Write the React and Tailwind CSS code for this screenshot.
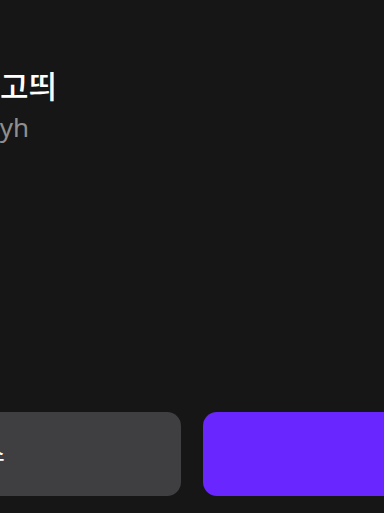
export default function App() {
  return (
    <div
      className="w-[384px] h-[513px] overflow-hidden bg-[#161616] flex flex-col"
      style={{ fontFamily: '"Noto Sans", "Noto Sans CJK KR", sans-serif' }}
    >
      <div className="pt-[62px] flex flex-col">
        <div className="w-[300px] ml-[-243px] text-right text-[31px] leading-[48px] font-medium text-white">
          띄어쓰기 고띄
        </div>
        <div className="w-[200px] ml-[-171px] text-right text-[26px] leading-[34px] text-[#8f8f8f]">
          @godde yh
        </div>
      </div>
      <div className="flex-1" />
      <div className="flex gap-[22px] ml-[-207px] pb-[17px]">
        <button className="w-[388px] h-[84px] shrink-0 rounded-[14px] bg-[#3f3f41] text-white text-[19px] font-medium">
          취소
        </button>
        <button className="w-[388px] h-[84px] shrink-0 rounded-[14px] bg-[#6a26fe] text-white text-[19px] font-medium pl-[40px]">
          확인
        </button>
      </div>
    </div>
  );
}
